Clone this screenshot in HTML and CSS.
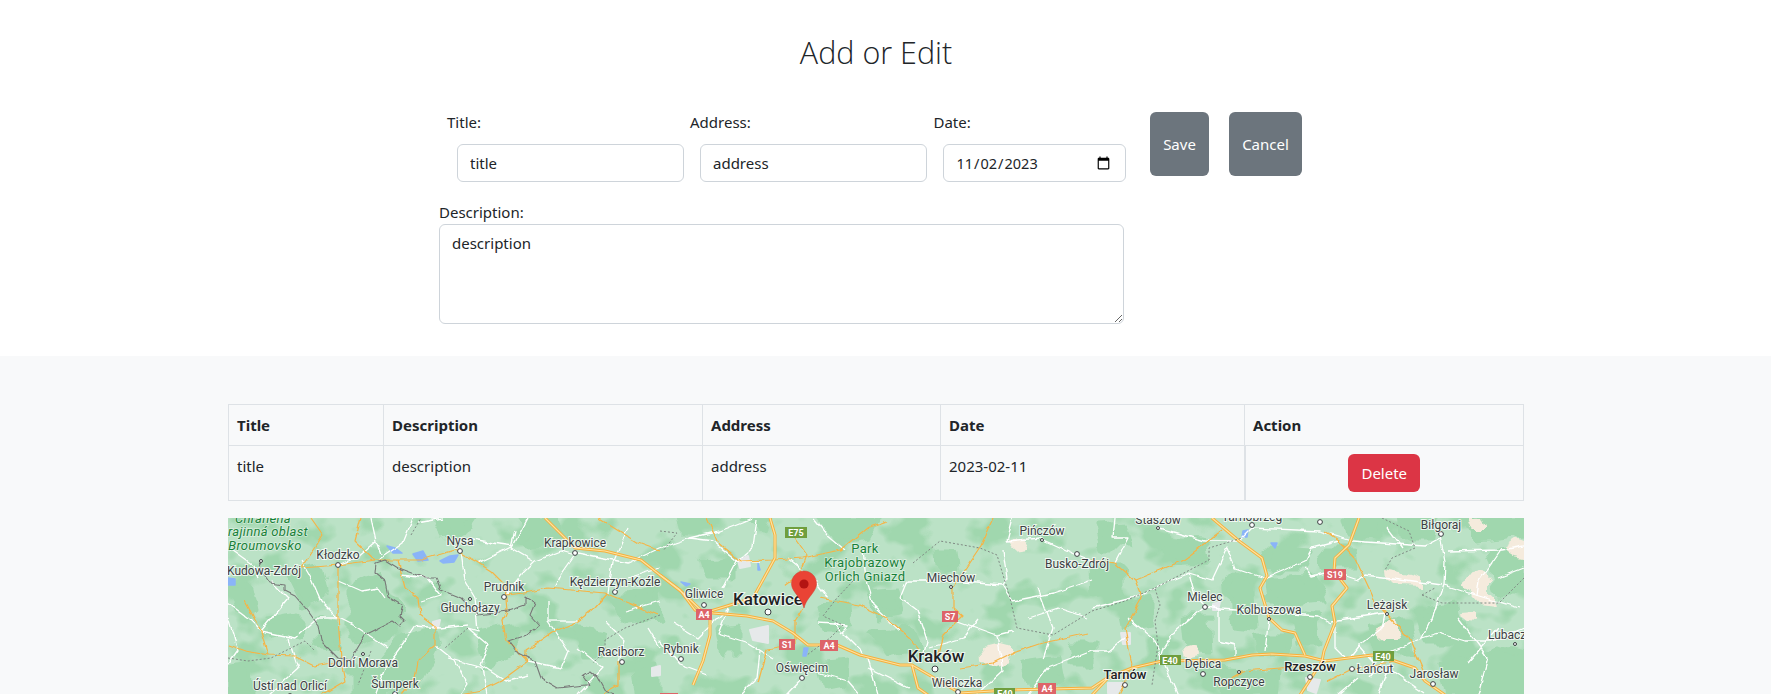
FILE: index.html
```html
<!DOCTYPE html>
<html lang="en">

<head>
    <meta charset="UTF-8">
    <meta name="viewport" content="width=device-width, initial-scale=1.0">
    <title>Add or Edit</title>
    <link rel="stylesheet" href="styles.css">
</head>

<body>

    <section class="edit-section">
        <h1>Add or Edit</h1>

        <form class="edit-form">
            <div class="form-row">
                <div class="field field-title">
                    <label for="title">Title:</label>
                    <input type="text" id="title" value="title">
                </div>
                <div class="field field-address">
                    <label for="address">Address:</label>
                    <input type="text" id="address" value="address">
                </div>
                <div class="field field-date">
                    <label for="date">Date:</label>
                    <input type="date" id="date" value="2023-11-02">
                </div>
                <button type="button" class="btn btn-save">Save</button>
                <button type="button" class="btn btn-cancel">Cancel</button>
            </div>
            <label for="description" class="description-label">Description:</label>
            <textarea id="description">description</textarea>
        </form>
    </section>

    <section class="list-section">
        <div class="list-inner">
            <table>
                <thead>
                    <tr>
                        <th class="col-title">Title</th>
                        <th class="col-description">Description</th>
                        <th class="col-address">Address</th>
                        <th class="col-date">Date</th>
                        <th class="col-action">Action</th>
                    </tr>
                </thead>
                <tbody>
                    <tr>
                        <td>title</td>
                        <td>description</td>
                        <td>address</td>
                        <td>2023-02-11</td>
                        <td class="action-cell"><button type="button" class="btn-delete">Delete</button></td>
                    </tr>
                </tbody>
            </table>

            <!-- map -->
            <svg class="map" viewBox="0 0 1296 177" width="1296" height="177">
                <defs>
                    <filter id="mottle" filterUnits="userSpaceOnUse" x="0" y="0" width="1296" height="177" color-interpolation-filters="sRGB">
                        <feTurbulence type="fractalNoise" baseFrequency="0.024 0.032" numOctaves="3" seed="7"/>
                        <feColorMatrix type="matrix" values="0 0 0 0 0.627  0 0 0 0 0.843  0 0 0 0 0.682  7 0 0 0 -3.7"/>
                    </filter>
                    <filter id="rough" filterUnits="userSpaceOnUse" x="-30" y="-30" width="1356" height="237">
                        <feTurbulence type="fractalNoise" baseFrequency="0.05" numOctaves="2" seed="3"/>
                        <feDisplacementMap in="SourceGraphic" scale="18" xChannelSelector="R" yChannelSelector="G"/>
                    </filter>
                    <filter id="wiggle" filterUnits="userSpaceOnUse" x="-30" y="-30" width="1356" height="237">
                        <feTurbulence type="fractalNoise" baseFrequency="0.09" numOctaves="2" seed="11"/>
                        <feDisplacementMap in="SourceGraphic" scale="5" xChannelSelector="R" yChannelSelector="G"/>
                    </filter>
                    <g id="motorways">
                        <path d="M317 0L347 30 377 33 413 42 432 57 452 72 467 92 485 95 519 98 545 103 565 115 580 127 609 127 632 137 672 147 684 147 690 170 700 177"/>
                        <path d="M684 147L732 175 780 172 864 170 879 160 904 150 934 143 997 142 1024 137 1044 136 1077 138 1097 143 1144 137 1167 143 1187 150 1197 163 1217 177"/>
                        <path d="M1131 0L1121 27 1107 40 1106 53 1119 70 1104 88 1107 105 1096 133 1094 143"/>
                        <path d="M984 0L1011 23 1034 40 1039 58 1032 70 1041 100 1054 112 1067 115 1077 137"/>
                        <path d="M542 0L547 17 547 40 525 80 499 88 476 95 455 75 432 57"/>
                        <path d="M482 97L482 117 475 143 465 167"/>
                        <path d="M1094 143L1080 165 1072 177"/>
                        <path d="M864 177L880 160"/>
                    </g>
                </defs>

                <rect class="land" width="1296" height="177"/>
                <rect class="mottle" width="1296" height="177"/>

                <g class="forest">
                    <path d="M122 70L150 55 160 75 175 100 165 118 140 125 122 118Z"/>
                    <path d="M60 55L95 50 100 75 75 85Z"/>
                    <path d="M175 118L205 110 210 130 190 170 150 177 140 160Z"/>
                    <path d="M0 72L25 68 30 90 10 95Z"/>
                    <path d="M205 0L245 0 235 15 215 18Z"/>
                    <path d="M290 0L325 0 335 18 300 25Z"/>
                    <path d="M385 80L430 72 432 100 400 103Z"/>
                    <path d="M250 115L285 108 285 135 260 150Z"/>
                    <path d="M350 110L375 115 375 140 355 140Z"/>
                    <path d="M40 100L70 95 70 115 45 118Z"/>
                    <path d="M405 150L432 145 432 177 410 177Z"/>
                    <path d="M125 150L160 150 155 177 125 177Z"/>
                    <path d="M90 100L108 105 110 130 90 125Z"/>
                    <path d="M0 150L20 148 22 177 0 177Z"/>
                    <path d="M452 0L478 0 475 15 455 15Z"/>
                    <path d="M590 0L650 0 640 20 610 25Z"/>
                    <path d="M512 0L540 0 535 12Z"/>
                    <path d="M475 45L505 42 505 58 480 58Z"/>
                    <path d="M640 72L668 70 672 95 650 98Z"/>
                    <path d="M710 35L723 35 725 50 712 52Z"/>
                    <path d="M645 112L680 110 690 130 660 135Z"/>
                    <path d="M590 145L620 142 618 165 595 168Z"/>
                    <path d="M795 145L830 140 835 165 800 170Z"/>
                    <path d="M842 125L864 125 864 145 845 145Z"/>
                    <path d="M490 112L510 110 510 135 495 135Z"/>
                    <path d="M590 90L620 88 622 110 595 110Z"/>
                    <path d="M870 10L900 8 905 28 875 28Z"/>
                    <path d="M930 20L975 22 978 40 940 42Z"/>
                    <path d="M1000 60L1025 62 1028 110 1005 108Z"/>
                    <path d="M1037 62L1085 58 1096 85 1060 88 1040 80Z"/>
                    <path d="M1037 28L1083 30 1078 50 1040 50Z"/>
                    <path d="M1094 30L1125 30 1128 50 1098 50Z"/>
                    <path d="M1118 0L1153 0 1150 18 1122 16Z"/>
                    <path d="M1168 0L1210 0 1208 20 1170 20Z"/>
                    <path d="M1240 0L1296 0 1296 15 1250 20Z"/>
                    <path d="M1187 95L1228 88 1235 125 1195 125Z"/>
                    <path d="M1212 145L1270 130 1296 135 1296 177 1220 177Z"/>
                    <path d="M1260 35L1296 30 1296 75 1270 75Z"/>
                    <path d="M957 100L980 100 982 135 960 133Z"/>
                    <path d="M895 85L925 78 925 105 900 108Z"/>
                    <path d="M1065 98L1090 100 1092 125 1070 125Z"/>
                    <path d="M1030 118L1062 118 1060 135 1033 135Z"/>
                    <path d="M1144 105L1180 105 1185 135 1150 135Z"/>
                    <path d="M864 50L895 50 895 75 865 78Z"/>
                    <path d="M990 150L1050 155 1048 177 995 177Z"/>
                </g>

                <g class="farmland">
                    <path d="M782 23L795 22 800 26 785 28Z"/>
                    <path d="M754 130L770 126 785 128 785 137 765 145 755 143Z"/>
                    <path d="M1157 52L1175 55 1192 60 1192 67 1170 66 1158 60Z"/>
                    <path d="M1240 58L1255 54 1262 62 1262 78 1270 84 1250 82 1238 68Z"/>
                    <path d="M1275 30L1290 20 1296 22 1296 40 1285 38Z"/>
                    <path d="M1242 0L1254 0 1258 10 1246 10Z"/>
                    <path d="M1152 108L1165 105 1170 120 1155 120Z"/>
                    <path d="M1234 95L1246 94 1246 103 1236 102Z"/>
                    <path d="M958 132L966 130 970 138 960 140Z"/>
                </g>

                <g class="urban">
                    <path d="M522 112L540 108 540 125 525 122Z"/>
                    <path d="M205 104L212 102 210 110 205 110Z"/>
                    <path d="M893 115L902 115 902 126 895 126Z"/>
                    <path d="M424 150L432 148 432 157 424 158Z"/>
                    <path d="M1078 160L1092 162 1088 175 1080 172Z"/>
                    <path d="M880 165L896 165 888 177 880 175Z"/>
                    <path d="M510 42L520 38 522 48 512 50Z"/>
                    <path d="M985 86L992 84 990 92 985 92Z"/>
                </g>

                <g class="water">
                    <path d="M159 28L167 30 174 35 165 35Z"/>
                    <path d="M185 36L195 33 200 42 190 43Z"/>
                    <path d="M212 43L222 38 230 37 226 44 215 45Z"/>
                    <path d="M0 60L7 61 7 67 0 67Z"/>
                    <path d="M576 130L580 130 578 138 575 138Z"/>
                    <path d="M530 45L532 52 530 52Z"/>
                    <path d="M453 64L462 66 458 68Z"/>
                    <path d="M1015 13L1020 12 1019 19 1014 19Z"/>
                    <path d="M1043 25L1049 25 1047 30Z"/>
                </g>

                <g class="road">
                    <path d="M143 0L148 23 153 37"/>
                    <path d="M233 33L237 63 247 80"/>
                    <path d="M247 80L250 113 240 110 260 127 253 147 277 163 300 157"/>
                    <path d="M240 107L213 110 187 108 177 123 157 150 147 177"/>
                    <path d="M207 127L227 143 240 167 233 177"/>
                    <path d="M173 57L200 60 213 77 193 83"/>
                    <path d="M73 43L83 60 93 83 110 100 90 100 67 120 33 113 20 100"/>
                    <path d="M43 63L60 80 33 113"/>
                    <path d="M110 63L133 73 150 70 157 80"/>
                    <path d="M320 83L320 103 340 133 333 150 300 143"/>
                    <path d="M307 43L293 57 278 77"/>
                    <path d="M307 43L333 33 347 37"/>
                    <path d="M287 13L283 30 305 43"/>
                    <path d="M347 37L333 57 327 70"/>
                    <path d="M377 103L397 123 390 143"/>
                    <path d="M397 93L432 83"/>
                    <path d="M320 103L350 103"/>
                    <path d="M0 100L10 133 0 147"/>
                    <path d="M240 20L265 25 285 28"/>
                    <path d="M190 5L215 0"/>
                    <path d="M0 30L25 48 30 60"/>
                    <path d="M110 47L128 40 148 23"/>
                    <path d="M150 42L175 25 185 0"/>
                    <path d="M250 45L285 28 300 0"/>
                    <path d="M350 35L400 45 432 30"/>
                    <path d="M400 10L385 45 380 75"/>
                    <path d="M20 100L0 85"/>
                    <path d="M60 120L70 150 40 177"/>
                    <path d="M160 130L130 110 110 100"/>
                    <path d="M220 140L255 150 260 177"/>
                    <path d="M350 130L375 150 350 177"/>
                    <path d="M420 110L432 130"/>
                    <path d="M400 60L432 50"/>
                    <path d="M432 30L462 20 492 13 525 0"/>
                    <path d="M462 20L485 23 509 43 532 43"/>
                    <path d="M529 0L525 30 509 43 495 70"/>
                    <path d="M585 0L599 17 617 32"/>
                    <path d="M635 33L639 67 645 87 672 113"/>
                    <path d="M672 80L679 63 722 63 775 67"/>
                    <path d="M672 80L689 93 699 123 695 137"/>
                    <path d="M730 103L769 117 785 113"/>
                    <path d="M769 117L775 153 749 177"/>
                    <path d="M775 33L779 60 775 67 785 83"/>
                    <path d="M785 0L779 23 812 20 849 37 864 43"/>
                    <path d="M785 83L825 75 864 62"/>
                    <path d="M532 133L529 160 512 177"/>
                    <path d="M432 123L452 147 479 157"/>
                    <path d="M575 160L559 177"/>
                    <path d="M590 105L620 107 612 115"/>
                    <path d="M575 150L620 163 632 177"/>
                    <path d="M500 90L490 115 520 125 545 140"/>
                    <path d="M445 105L470 120 500 90"/>
                    <path d="M560 40L585 60 600 80"/>
                    <path d="M605 105L640 140 650 177"/>
                    <path d="M700 130L735 120 750 100"/>
                    <path d="M800 100L830 90 860 100"/>
                    <path d="M810 70L825 110 815 140"/>
                    <path d="M640 150L680 170"/>
                    <path d="M800 177L820 150 864 133"/>
                    <path d="M931 10L977 23 1011 23 1024 10 1091 13 1124 23 1197 28 1212 20"/>
                    <path d="M1212 17L1217 43 1216 67 1204 100 1194 120 1164 133 1141 160"/>
                    <path d="M1216 67L1251 78 1291 90"/>
                    <path d="M1274 30L1251 63 1249 78"/>
                    <path d="M1220 33L1274 32 1296 28"/>
                    <path d="M1194 120L1211 115 1237 123 1264 123 1296 110"/>
                    <path d="M1104 103L1157 95 1154 110 1131 127 1121 140"/>
                    <path d="M991 90L1007 91 1077 97 1091 98 1104 105"/>
                    <path d="M977 88L991 90 991 123 1007 127 1007 138"/>
                    <path d="M1041 100L1037 133"/>
                    <path d="M1107 107L1107 130 1117 140"/>
                    <path d="M1084 30L1077 43 1037 60 1007 50 999 30 984 62 961 55 941 63 904 80 864 90"/>
                    <path d="M1077 50L1084 58 1104 53 1131 62 1137 57 1164 60 1214 67"/>
                    <path d="M1084 30L1111 23"/>
                    <path d="M961 55L967 77 977 88 947 113 934 133 931 147"/>
                    <path d="M864 133L881 133 897 120"/>
                    <path d="M887 45L900 20 885 20 887 0"/>
                    <path d="M1196 175L1160 150 1150 177"/>
                    <path d="M1240 145L1270 110"/>
                    <path d="M900 100L925 120 950 177"/>
                    <path d="M1130 127L1150 150"/>
                    <path d="M1230 100L1260 140 1250 177"/>
                    <path d="M1270 60L1296 50"/>
                    <path d="M1160 10L1175 30"/>
                    <path d="M1130 160L1110 177"/>
                </g>

                <g class="minor-road">
                    <path d="M73 50L110 47 147 42 193 42 227 32 247 43 263 53 277 67 279 93 275 103 278 123 300 143"/>
                    <path d="M277 77L297 75 320 70 377 75 430 97"/>
                    <path d="M170 42L177 70 190 80 192 97 207 108 207 127 190 143 187 160 173 177"/>
                    <path d="M380 75L367 90 350 103 323 115 298 132 298 143"/>
                    <path d="M300 143L273 163 253 173 233 177"/>
                    <path d="M0 127L17 133 40 137 67 138 87 148 113 143 117 163 93 177"/>
                    <path d="M17 83L33 113 40 137"/>
                    <path d="M110 47L110 100 113 140"/>
                    <path d="M83 0L95 17 73 50"/>
                    <path d="M133 0L127 23 147 42"/>
                    <path d="M370 0L410 25 432 33"/>
                    <path d="M390 143L390 167 373 177"/>
                    <path d="M864 42L887 45 907 62 914 80 897 110 904 147"/>
                    <path d="M907 62L954 43 994 13"/>
                    <path d="M1097 13L1111 23 1127 40 1147 83 1159 97 1181 120 1197 157"/>
                    <path d="M765 0L752 30 725 70 725 90 734 98 715 117 709 140"/>
                    <path d="M575 90L567 103 567 127 539 132 530 165"/>
                    <path d="M565 17L579 37 572 57 557 68"/>
                    <path d="M592 80L632 87 659 100 682 120 692 133"/>
                    <path d="M479 0L489 23 512 43 545 42 575 40 612 32 639 10 659 3"/>
                    <path d="M732 150L765 145 785 135 815 125 860 115"/>
                    <path d="M890 177L904 147"/>
                    <path d="M990 168L1015 153 1075 148"/>
                    <path d="M1100 163L1124 151 1167 143"/>
                </g>

                <use href="#motorways" class="motorway-edge"/>
                <use href="#motorways" class="motorway-core"/>

                <g class="border">
                    <path d="M33 43L30 48 42 65 57 67 57 73 67 78 80 93 90 107 93 123 110 140 122 142 137 117 147 112 165 103 172 108 177 103 172 98 175 87 160 78 157 63 147 55 148 45 157 42 170 50 197 60 208 60 213 72 233 80 250 97 280 93 297 87 297 78 308 85 303 97 312 107 298 117 280 123 287 133 307 143 313 160 330 170 357 167 362 167 355 157 362 153 370 160 377 173 387 177"/>
                </g>
                <g class="border-dashed">
                    <path d="M432 97L397 110 377 122 377 133 365 145"/>
                    <path d="M0 140L20 143 43 140 77 123 87 133"/>
                    <path d="M240 110L217 130"/>
                    <path d="M183 17L193 0"/>
                    <path d="M143 133L130 167"/>
                    <path d="M432 13L449 15 435 33"/>
                    <path d="M625 63L609 80 595 98 615 107 602 120 579 137"/>
                    <path d="M685 45L712 23 752 30 769 37 782 80 789 110 825 117 864 93 897 83 927 70 932 87 927 103 930 127 924 167"/>
                    <path d="M927 70L981 42 981 30 1014 20"/>
                    <path d="M1154 0L1181 13 1187 30 1164 40 1157 52"/>
                    <path d="M1194 77L1207 70"/>
                    <path d="M1194 77L1214 85 1271 85 1296 60"/>
                </g>

                <g class="shield shield-red">
                    <rect x="468" y="91" width="16" height="11"/>
                    <rect x="551" y="121" width="16" height="11"/>
                    <rect x="592" y="122" width="18" height="11"/>
                    <rect x="714" y="93" width="16" height="11"/>
                    <rect x="810" y="165" width="18" height="11"/>
                    <rect x="1096" y="51" width="22" height="11"/>
                    <rect x="432" y="175" width="18" height="4"/>
                    <text x="476" y="100">A4</text>
                    <text x="559" y="130">S1</text>
                    <text x="601" y="131">A4</text>
                    <text x="722" y="102">S7</text>
                    <text x="819" y="174">A4</text>
                    <text x="1107" y="60">S19</text>
                </g>
                <g class="shield shield-green">
                    <rect x="557" y="9" width="22" height="11"/>
                    <rect x="932" y="137" width="21" height="10"/>
                    <rect x="1145" y="133" width="21" height="10"/>
                    <rect x="766" y="170" width="21" height="10"/>
                    <text x="568" y="18">E75</text>
                    <text x="942" y="146">E40</text>
                    <text x="1155" y="142">E40</text>
                    <text x="777" y="179">E40</text>
                </g>

                <g class="dot">
                    <circle cx="110" cy="47" r="2.4"/>
                    <circle cx="232" cy="33" r="2.4"/>
                    <circle cx="347" cy="35" r="2.4"/>
                    <circle cx="276" cy="79" r="2.4"/>
                    <circle cx="387" cy="74" r="2.4"/>
                    <circle cx="394" cy="144" r="2.4"/>
                    <circle cx="62" cy="178" r="2.4"/>
                    <circle cx="167" cy="176" r="2.4"/>
                    <circle cx="476" cy="87" r="2.4"/>
                    <circle cx="453" cy="141" r="2.4"/>
                    <circle cx="574" cy="160" r="2.4"/>
                    <circle cx="730" cy="174" r="2.4"/>
                    <circle cx="849" cy="36" r="2.4"/>
                    <circle cx="1024" cy="7" r="2.4"/>
                    <circle cx="1092" cy="4" r="2.4"/>
                    <circle cx="1213" cy="16" r="2.4"/>
                    <circle cx="977" cy="89" r="2.4"/>
                    <circle cx="975" cy="156" r="2.4"/>
                    <circle cx="1124" cy="151" r="2.4"/>
                    <circle cx="1205" cy="166" r="2.4"/>
                    <circle cx="897" cy="167" r="2.4"/>
                    <circle cx="1082" cy="159" r="2.4"/>
                    <circle cx="540" cy="94" r="3"/>
                    <circle cx="707" cy="151" r="3"/>
                    <circle cx="33" cy="43" r="1.5"/>
                    <circle cx="242" cy="81" r="1.5"/>
                    <circle cx="135" cy="136" r="1.5"/>
                    <circle cx="723" cy="69" r="1.5"/>
                    <circle cx="814" cy="22" r="1.5"/>
                    <circle cx="930" cy="10" r="1.5"/>
                    <circle cx="1041" cy="101" r="1.5"/>
                    <circle cx="1159" cy="96" r="1.5"/>
                    <circle cx="1287" cy="126" r="1.5"/>
                    <circle cx="1011" cy="154" r="1.5"/>
                </g>

                <g class="park-label">
                    <text class="park-italic" x="35" y="5">Chráněná</text>
                    <text class="park-italic" x="40" y="18">rajinná oblast</text>
                    <text class="park-italic" x="37" y="32">Broumovsko</text>
                    <text x="637" y="35">Park</text>
                    <text x="637" y="49">Krajobrazowy</text>
                    <text x="637" y="63">Orlich Gniazd</text>
                </g>

                <g class="city">
                    <text x="110" y="41">Kłodzko</text>
                    <text x="36" y="57">Kudowa-Zdrój</text>
                    <text x="232" y="27">Nysa</text>
                    <text x="347" y="29">Krapkowice</text>
                    <text x="276" y="73">Prudnik</text>
                    <text x="242" y="94">Głuchołazy</text>
                    <text x="387" y="68">Kędzierzyn-Koźle</text>
                    <text x="393" y="138">Raciborz</text>
                    <text x="135" y="149">Dolní Morava</text>
                    <text x="62" y="172">Ústí nad Orlicí</text>
                    <text x="167" y="170">Šumperk</text>
                    <text x="476" y="80">Gliwice</text>
                    <text x="453" y="135">Rybnik</text>
                    <text x="574" y="154">Oświęcim</text>
                    <text x="729" y="169">Wieliczka</text>
                    <text x="723" y="64">Miechów</text>
                    <text x="814" y="17">Pińczów</text>
                    <text x="849" y="50">Busko-Zdrój</text>
                    <text x="930" y="6">Staszów</text>
                    <text x="1024" y="3">Tarnobrzeg</text>
                    <text x="977" y="83">Mielec</text>
                    <text x="1041" y="96">Kolbuszowa</text>
                    <text x="1159" y="91">Leżajsk</text>
                    <text x="1213" y="11">Biłgoraj</text>
                    <text x="1287" y="121">Lubaczów</text>
                    <text x="975" y="150">Dębica</text>
                    <text x="1011" y="168">Ropczyce</text>
                    <text x="1147" y="155">Łańcut</text>
                    <text x="1206" y="160">Jarosław</text>
                </g>
                <g class="city city-mid">
                    <text x="897" y="161">Tarnów</text>
                    <text x="1082" y="153">Rzeszów</text>
                </g>
                <g class="city city-big">
                    <text x="540" y="87">Katowice</text>
                    <text x="708" y="144">Kraków</text>
                </g>

                <path class="pin" d="M576 90C574 82 569 78 566 73 564.5 70.5 563.5 68.5 563.5 65.5 563.5 58.6 569 53 576 53 583 53 588.5 58.6 588.5 65.5 588.5 68.5 587.5 70.5 586 73 583 78 578 82 576 90Z"/>
                <circle class="pin-dot" cx="576" cy="66" r="4.6"/>
            </svg>
        </div>
    </section>

</body>

</html>
```

FILE: styles.css
```css
body {
    font-family: 'Noto Sans', sans-serif;
    font-size: 15px;
    margin: 0;
    background-color: #fff;
    color: #212529;
}

h1 {
    margin: 0;
    padding-top: 33px;
    height: 77px;
    box-sizing: content-box;
    font-size: 30.5px;
    font-weight: 300;
    line-height: 38px;
    text-align: center;
    font-family: 'Open Sans', sans-serif;
    color: #212529;
}

.edit-section {
    height: 356px;
    padding-right: 19px;
    box-sizing: border-box;
}

.edit-form {
    width: 874px;
    margin: 0 auto;
}

.form-row {
    display: flex;
    align-items: flex-start;
    padding-left: 8px;
}

.field {
    flex: none;
}

.field label {
    display: block;
    line-height: 24px;
    margin-bottom: 10px;
}

.field input {
    display: block;
    height: 38px;
    margin-left: 10px;
    padding: 0 12px;
    box-sizing: border-box;
    border: 1px solid #ced4da;
    border-radius: 6px;
    background: #fff;
    color: #212529;
    font-family: inherit;
    font-size: 15px;
}

.field-title {
    width: 243px;
}

.field-address {
    width: 243.5px;
}

.field-title input,
.field-address input {
    width: 227px;
}

.field-date {
    width: 216.5px;
}

.field-date input {
    width: 183px;
    margin-left: 9px;
    font-size: 14.5px;
}

.btn {
    height: 64px;
    margin-top: 2px;
    border: 0;
    border-radius: 6px;
    background: #6c757d;
    color: #fff;
    font-family: inherit;
    font-size: 15px;
}

.btn-save {
    width: 59px;
    margin-right: 20px;
}

.btn-cancel {
    width: 73px;
}

.description-label {
    display: block;
    margin-top: 18px;
    line-height: 24px;
}

textarea {
    display: block;
    width: 685px;
    height: 100px;
    padding: 6px 12px;
    box-sizing: border-box;
    border: 1px solid #ced4da;
    border-radius: 6px;
    color: #212529;
    font-family: inherit;
    font-size: 15px;
    line-height: 24px;
}

.list-section {
    height: 338px;
    padding-top: 48px;
    padding-right: 19px;
    box-sizing: border-box;
    background: #f8f9fa;
    overflow: hidden;
}

.list-inner {
    width: 1296px;
    margin: 0 auto;
}

table {
    width: 1295px;
    table-layout: fixed;
    border-collapse: collapse;
}

th,
td {
    box-sizing: border-box;
    border: 1px solid #dee2e6;
    padding: 8px;
    text-align: left;
    vertical-align: top;
    line-height: 24px;
}

th {
    font-weight: 700;
}

.col-title { width: 155px; }
.col-description { width: 319px; }
.col-address { width: 238px; }
.col-date { width: 304px; }
.col-action { width: 279px; }

.action-cell {
    text-align: center;
    border-left-width: 2px;
}

.btn-delete {
    display: inline-block;
    vertical-align: top;
    width: 72px;
    height: 38px;
    border: 0;
    border-radius: 6px;
    background: #dc3545;
    color: #fff;
    font-family: inherit;
    font-size: 15px;
}

/* map */
.map {
    display: block;
    margin-top: 17px;
    overflow: hidden;
}

.land { fill: #bbe2c6; }
.mottle { filter: url(#mottle); }
.forest { filter: url(#rough); }
.forest path { fill: #a0d7ae; stroke: #a0d7ae; stroke-width: 5; stroke-linejoin: round; }
.farmland { filter: url(#rough); }
.farmland path { fill: #f5ebdd; stroke: #f5ebdd; stroke-width: 2; stroke-linejoin: round; }
.urban path { fill: #e6e9ea; stroke: #e6e9ea; stroke-width: 2; stroke-linejoin: round; }
.water path { fill: #8ab4f8; stroke: #8ab4f8; stroke-width: 1.5; stroke-linejoin: round; }

.road { filter: url(#wiggle); }
.road path { fill: none; stroke: #fff; stroke-width: 1.3; stroke-linejoin: round; }
.minor-road { filter: url(#wiggle); }
.minor-road path { fill: none; stroke: #f6b445; stroke-width: 1.2; stroke-linejoin: round; }

.motorway-edge { fill: none; stroke: #f6b03c; stroke-width: 3; stroke-linejoin: round; }
.motorway-core { fill: none; stroke: #fde3a0; stroke-width: 1.2; stroke-linejoin: round; }

.border { filter: url(#wiggle); }
.border path { fill: none; stroke: #787878; stroke-width: 1.1; stroke-linejoin: round; }
.border-dashed path { fill: none; stroke: #808a84; stroke-width: 1; stroke-dasharray: 2 2; }

.shield text {
    font-family: Roboto, sans-serif;
    font-size: 9px;
    font-weight: 700;
    fill: #fff;
    text-anchor: middle;
}

.shield-red rect { fill: #dd6468; }
.shield-green rect { fill: #6f9e3e; }

.dot circle { fill: #fff; stroke: #3c4043; stroke-width: 1; }

.city text {
    font-family: Roboto, sans-serif;
    font-size: 12px;
    fill: #3c4043;
    text-anchor: middle;
    paint-order: stroke;
    stroke: rgba(255, 255, 255, 0.75);
    stroke-width: 2px;
}

.city-mid text {
    font-size: 13px;
    font-weight: 500;
    fill: #202124;
}

.city-big text {
    font-size: 17px;
    font-weight: 500;
    fill: #202124;
}

.park-label text {
    font-family: Roboto, sans-serif;
    font-size: 13px;
    letter-spacing: 0.3px;
    fill: #188038;
    text-anchor: middle;
    paint-order: stroke;
    stroke: rgba(255, 255, 255, 0.5);
    stroke-width: 1.5px;
}

.park-label .park-italic {
    font-style: italic;
}

.pin { fill: #ea4335; stroke: #d33a2c; stroke-width: 0.5; }
.pin-dot { fill: #b31412; }
```
